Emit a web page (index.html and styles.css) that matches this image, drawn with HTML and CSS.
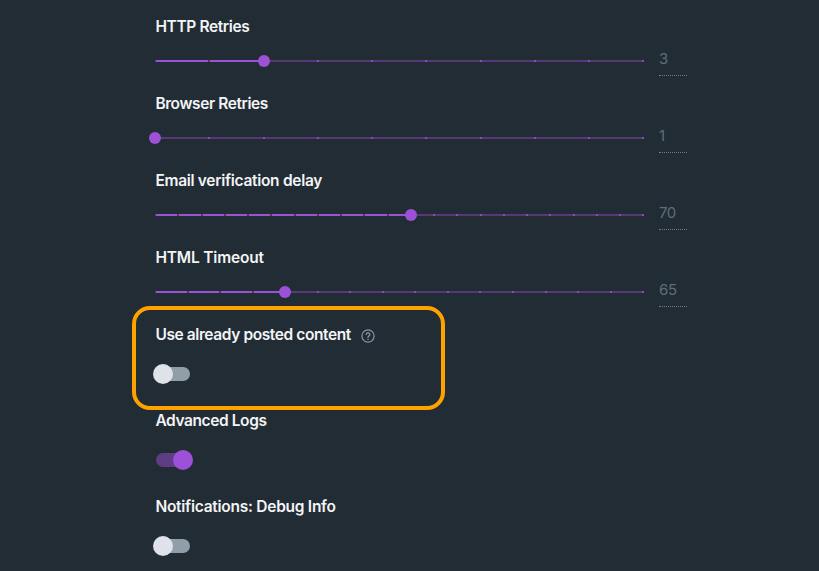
FILE: index.html
```html
<!DOCTYPE html>
<html lang="en">
<head>
<meta charset="utf-8">
<title>Settings</title>
<link rel="stylesheet" href="styles.css">
</head>
<body>
<main class="settings">
  <section class="field">
    <h2 class="label label-http">HTTP Retries</h2>
    <div class="row"><div class="slider" data-steps="9" data-value="2"></div><output class="value">3</output></div>
  </section>
  <section class="field">
    <h2 class="label label-browser">Browser Retries</h2>
    <div class="row"><div class="slider" data-steps="9" data-value="0"></div><output class="value">1</output></div>
  </section>
  <section class="field">
    <h2 class="label label-email">Email verification delay</h2>
    <div class="row"><div class="slider" data-steps="21" data-value="11"></div><output class="value">70</output></div>
  </section>
  <section class="field">
    <h2 class="label label-timeout">HTML Timeout</h2>
    <div class="row"><div class="slider" data-steps="15" data-value="4"></div><output class="value">65</output></div>
  </section>
  <section class="field highlighted">
    <h2 class="label label-posted">Use already posted content</h2>
    <svg class="help" viewBox="0 0 14 14" width="14" height="14" fill="none" stroke="currentColor" stroke-linecap="round" stroke-linejoin="round"><circle cx="7" cy="7" r="6.1" stroke-width="1.2"/><path d="M5.3 5.4a1.75 1.75 0 1 1 2.7 1.5Q7 7.4 7 8.3" stroke-width="1.2"/><circle cx="7" cy="10.3" r=".75" fill="currentColor" stroke="none"/></svg>
    <div class="switch"></div>
  </section>
  <section class="field toggle">
    <h2 class="label label-logs">Advanced Logs</h2>
    <div class="switch on"></div>
  </section>
  <section class="field toggle">
    <h2 class="label label-debug">Notifications: Debug Info</h2>
    <div class="switch"></div>
  </section>
</main>
<script src="sliders.js"></script>
</body>
</html>
```
FILE: styles.css
```css
* { box-sizing: border-box; }
body {
  margin: 0;
  height: 571px;
  overflow: hidden;
  background: #222c35;
  color: #f3f4f5;
  font-family: Inter, "Liberation Sans", sans-serif;
}
.settings { padding: 15px 0 0 155px; }
.field { height: 77px; }
.label {
  margin: 0;
  padding-left: 0.4px;
  height: 24px;
  font-size: 15.5px;
  font-weight: 600;
  line-height: 24px;
  letter-spacing: -0.3px;
  white-space: nowrap;
  width: max-content;
}
.label-http { letter-spacing: -0.38px; }
.label-browser, .label-posted, .label-logs { letter-spacing: -0.4px; }
.label-timeout { letter-spacing: -0.17px; }
.label-debug { letter-spacing: -0.26px; }
.row { display: flex; align-items: flex-start; height: 40px; }
.slider {
  position: relative;
  width: 489px;
  height: 2px;
  margin-top: 21px;
  background: #553a75;
}
.fill { height: 2px; background: #9d50d8; }
.marks {
  position: absolute;
  top: 0;
  left: -1px;
  width: 490.25px;
  display: flex;
  justify-content: space-between;
}
.mark { width: 2px; height: 2px; background: #8b49bd; }
.mark.passed { background: #4c3b65; }
.mark.passed:first-child { clip-path: inset(0 0 0 1px); }
.thumb {
  position: absolute;
  top: -5px;
  width: 12px;
  height: 12px;
  margin-left: -6px;
  border-radius: 50%;
  background: #9d50d8;
}
.value {
  width: 28px;
  height: 37px;
  margin-left: 15px;
  padding-top: 9px;
  color: #5f6d7b;
  font-size: 15px;
  letter-spacing: -0.4px;
  line-height: 22px;
  border-bottom: 1px dotted #707b86;
}
.highlighted {
  display: grid;
  grid-template-columns: 197px 14px;
  column-gap: 9px;
  align-content: start;
  width: 313px;
  height: 104px;
  margin: -17px 0 -1px -23px;
  padding: 13px 0 0 19px;
  border: 4px solid #ffa200;
  border-radius: 18px;
}
.highlighted .switch { grid-column: 1; }
.help { margin-top: 6px; color: #8996a5; }
.switch {
  position: relative;
  width: 34px;
  height: 14px;
  margin: 20px 0 0 1px;
  border-radius: 7px;
  background: #909eaa;
}
.switch::after {
  content: "";
  position: absolute;
  top: -3px;
  left: -3px;
  width: 20px;
  height: 20px;
  border-radius: 50%;
  background: #dfe2e8;
}
.switch.on { background: #5f3d85; }
.switch.on::after { left: 17px; background: #9d50d8; }
.toggle { height: 86px; }
```
FILE: sliders.js
```js
document.querySelectorAll('.slider').forEach(function (slider) {
  var steps = Number(slider.dataset.steps);
  var value = Number(slider.dataset.value);
  var position = value / steps * 100 + '%';
  var fill = document.createElement('div');
  var marks = document.createElement('div');
  var thumb = document.createElement('div');
  fill.className = 'fill';
  fill.style.width = position;
  marks.className = 'marks';
  for (var i = 0; i <= steps; i++) {
    var mark = document.createElement('span');
    mark.className = i <= value ? 'mark passed' : 'mark';
    marks.appendChild(mark);
  }
  thumb.className = 'thumb';
  thumb.style.left = position;
  slider.append(fill, marks, thumb);
});
```
